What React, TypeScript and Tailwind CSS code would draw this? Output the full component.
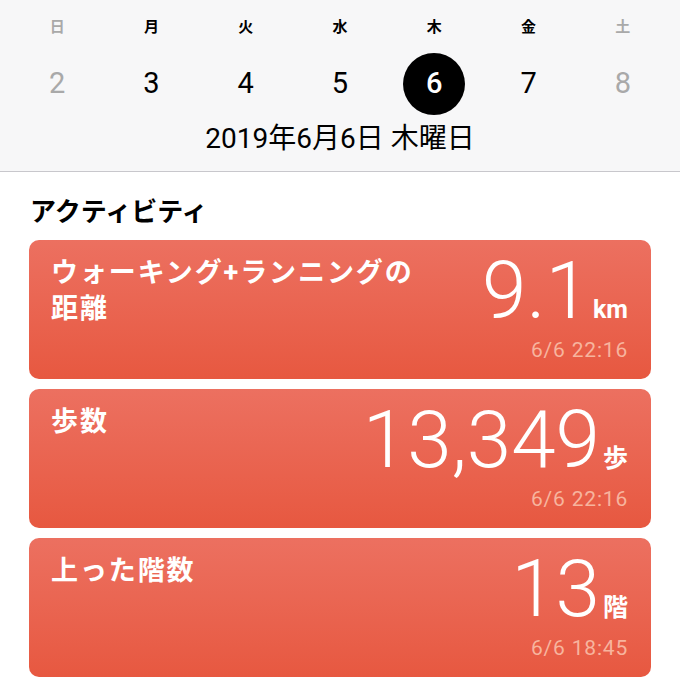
import React from 'react';

const FONT = { fontFamily: '"Helvetica Neue", Roboto, "Noto Sans CJK JP", sans-serif' };

const DAYS = [
  { label: '日', num: 2, muted: true },
  { label: '月', num: 3 },
  { label: '火', num: 4 },
  { label: '水', num: 5 },
  { label: '木', num: 6, selected: true },
  { label: '金', num: 7 },
  { label: '土', num: 8, muted: true },
];

const CARDS = [
  { title: 'ウォーキング+ランニングの\n距離', value: '9.1', unit: 'km', time: '6/6 22:16' },
  { title: '歩数', value: '13,349', unit: '歩', time: '6/6 22:16' },
  { title: '上った階数', value: '13', unit: '階', time: '6/6 18:45' },
];

function ActivityCard({ title, value, unit, time }: (typeof CARDS)[number]) {
  return (
    <div className="h-[139px] rounded-[10px] bg-gradient-to-b from-[#ec7060] to-[#e75840] flex justify-between pl-[22px] pr-[23px] text-white">
      <div className="pt-[15px] text-[27px] leading-[36px] font-bold tracking-[1.9px] whitespace-pre-line">{title}</div>
      <div className="flex flex-col items-end">
        <div className="flex items-baseline mt-[12px] h-[78px]">
          <span className="text-[80px] leading-[78px] font-light">{value}</span>
          <span className="text-[25px] font-bold ml-[3px]">{unit}</span>
        </div>
        <div className="mt-[8px] text-[21px] leading-[24px] tracking-[0.8px] text-[#f7b49e]">{time}</div>
      </div>
    </div>
  );
}

export default function App() {
  return (
    <div className="w-[680px] h-[680px] bg-white overflow-hidden" style={FONT}>
      <div className="h-[172px] bg-[#f7f7f8] border-b border-[#c8c7cc] flex flex-col">
        <div className="grid grid-cols-7 px-[10px] pt-[17px]">
          {DAYS.map((d) => (
            <div key={d.label} className="flex flex-col items-center">
              <div className={`text-[15px] leading-[20px] font-bold ${d.muted ? 'text-[#a9a9a9]' : 'text-black'}`}>{d.label}</div>
              <div className="mt-[16px] h-[62px] flex items-center justify-center">
                {d.selected ? (
                  <div className="w-[62px] h-[62px] rounded-full bg-black text-white flex items-center justify-center text-[29px] font-medium">
                    {d.num}
                  </div>
                ) : (
                  <span className={`text-[29px] ${d.muted ? 'text-[#a9a9a9]' : 'text-black'}`}>{d.num}</span>
                )}
              </div>
            </div>
          ))}
        </div>
        <div className="text-center text-[28px] leading-[32px] mt-[8px] text-black">2019年6月6日 木曜日</div>
      </div>
      <div className="px-[29px]">
        <div className="pt-[24px] pb-[12px] px-[1px] text-[26px] leading-[32px] font-bold text-black">アクティビティ</div>
        <div className="flex flex-col gap-[10px]">
          {CARDS.map((c) => (
            <ActivityCard key={c.title} {...c} />
          ))}
        </div>
      </div>
    </div>
  );
}
